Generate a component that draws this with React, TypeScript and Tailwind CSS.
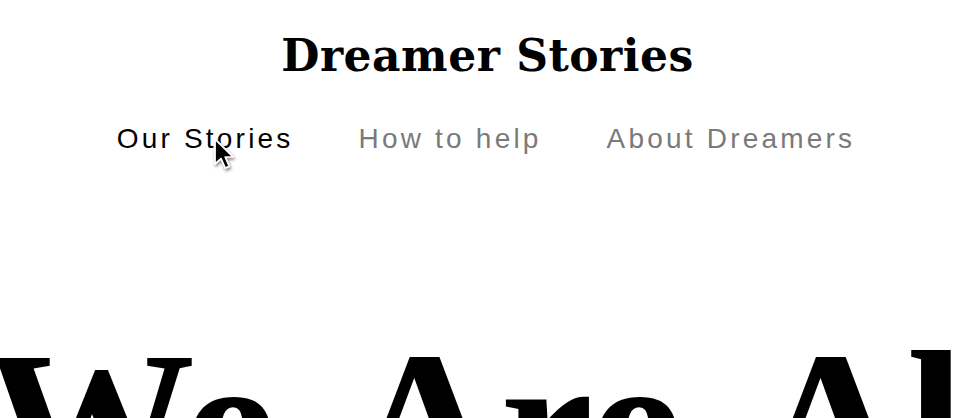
import React from "react";

function Cursor() {
  return (
    <svg
      className="absolute left-[208px] top-[133px] pointer-events-none"
      width="34"
      height="44"
      viewBox="0 0 34 44"
      style={{ filter: "drop-shadow(1px 2px 1.5px rgba(0,0,0,0.45))" }}
    >
      <path
        d="M7 6 L7 31 L13 25.6 L17.2 35.2 L21.4 33.4 L17.3 24.1 L25 23.8 Z"
        fill="#000"
        stroke="#fff"
        strokeWidth="1.8"
        strokeLinejoin="round"
      />
    </svg>
  );
}

export default function App() {
  return (
    <div className="relative w-[961px] h-[418px] overflow-hidden bg-white">
      <header className="flex flex-col items-center pl-[14px] pt-[28px]">
        <h1 className="font-['DejaVu_Serif',serif] font-bold text-[44px] leading-[56px] text-black tracking-[0.5px]">
          Dreamer Stories
        </h1>
        <nav className="mt-[37px] ml-[-3px] flex gap-[65px] font-['Liberation_Sans',Arial,sans-serif] text-[28px] leading-[36px] tracking-[3.2px]">
          <a className="text-black">Our Stories</a>
          <a className="text-[#7a7a7a]">How to help</a>
          <a className="text-[#7a7a7a]">About Dreamers</a>
        </nav>
      </header>
      <h2 className="mt-[163px] ml-[-15px] whitespace-nowrap font-['Liberation_Serif',serif] font-bold text-[210px] leading-[210px] text-black [word-spacing:31px]">
        We Are All Dreamers
      </h2>
      <Cursor />
    </div>
  );
}
